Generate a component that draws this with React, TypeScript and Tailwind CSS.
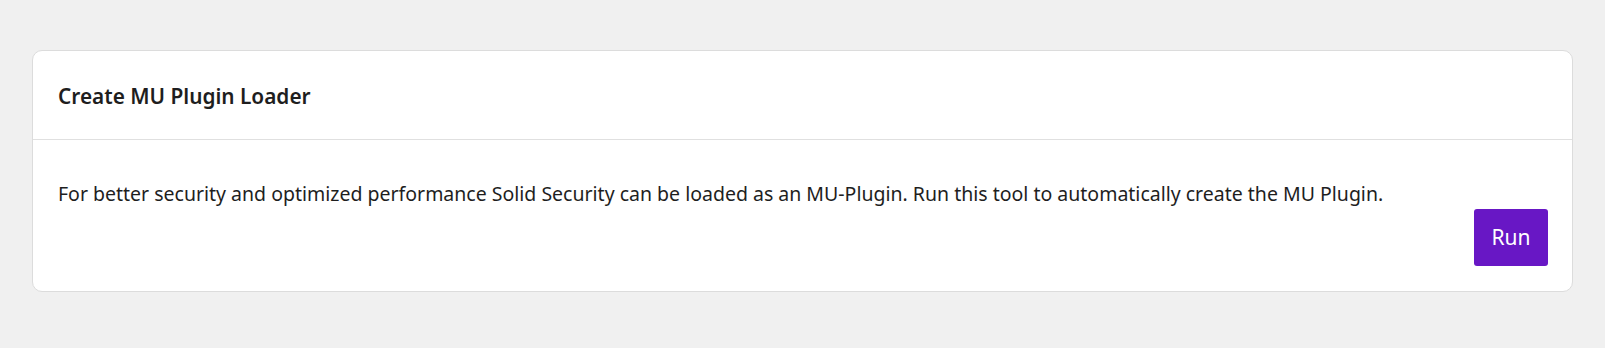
export default function App() {
  return (
    <div
      className="min-h-[348px] w-full bg-[#f0f0f0] px-8 pt-[50px]"
      style={{ fontFamily: '"Noto Sans", "Open Sans", sans-serif' }}
    >
      <section className="rounded-[10px] border border-[#dcdcdc] bg-white">
        <div className="flex h-[89px] items-center border-b border-[#e0e0e0] px-[25px]">
          <h2 className="pt-[3px] text-[20.8px] font-semibold text-[#1e1e1e]">Create MU Plugin Loader</h2>
        </div>
        <div className="flex flex-col px-[24px] pt-[39px] pb-[25px] pl-[25px]">
          <p className="text-[19.5px] leading-[30px] text-[#1e1e1e]">
            For better security and optimized performance Solid Security can be loaded as an MU-Plugin. Run this tool to
            automatically create the MU Plugin.
          </p>
          <div className="flex justify-end">
            <button
              type="button"
              className="h-[57px] w-[74px] rounded-[3px] bg-[#6817c5] text-[21px] text-white"
            >
              Run
            </button>
          </div>
        </div>
      </section>
    </div>
  );
}
